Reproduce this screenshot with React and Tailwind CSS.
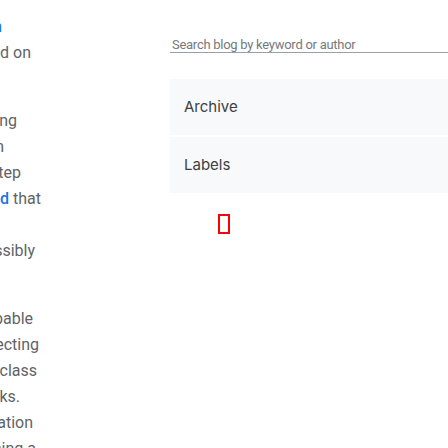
const body = "font-['Roboto',sans-serif] text-[16px] leading-[26px] text-[#5f6368]";

function Line({ end, children, className = "" }) {
  // fragment of a wrapped line; the start of the line runs off to the left
  return (
    <div className={`flex justify-end h-[26px] ${end}`}>
      <span className={`whitespace-nowrap shrink-0 ${className}`}>{children}</span>
    </div>
  );
}

export default function App() {
  return (
    <div className="w-[448px] h-[448px] overflow-hidden bg-white flex">
      {/* article column, clipped at the left edge */}
      <div className={`w-[45px] shrink-0 ${body}`}>
        <p className="mt-[14px]">
          <Line end="w-[2px]" className="text-[#1a73e8]">documentation</Line>
          <Line end="w-[31px]">model based on</Line>
          <Line end="w-[0px]">it</Line>
        </p>
        <p className="mt-[16px]">
          <Line end="w-[17px]">training</Line>
          <Line end="w-[4px]">on</Line>
          <Line end="w-[21px]">next step</Line>
          <Line end="w-[41px]">
            <span className="text-[#1a73e8] font-medium">found</span> that
          </Line>
          <Line end="w-[0px]">a</Line>
          <Line end="w-[35px]">possibly</Line>
          <Line end="w-[0px]">to</Line>
        </p>
        <p className="mt-[16px]">
          <Line end="w-[33px]">capable</Line>
          <Line end="w-[39px]">detecting</Line>
          <Line end="w-[37px]">first-class</Line>
          <Line end="w-[20px]">tasks.</Line>
          <Line end="w-[33px]">information</Line>
          <Line end="w-[36px]">using a</Line>
        </p>
      </div>

      {/* sidebar */}
      <aside className="ml-[125px] w-[300px] shrink-0">
        <div className="mt-[38px] border-b border-[#9aa0a6] pl-[2px] font-['Roboto',sans-serif] text-[13px] tracking-[-0.27px] leading-[14px] text-[#757a80]">
          Search blog by keyword or author
        </div>
        <div className="mt-[26px] h-[56px] bg-[#f8f9fa] flex items-center px-[14px] font-['Inter',sans-serif] text-[15px] text-[#3c4043]">
          Archive
        </div>
        <div className="mt-[2px] h-[56px] bg-[#f8f9fa] flex items-center px-[14px] font-['Inter',sans-serif] text-[15px] text-[#3c4043]">
          Labels
        </div>
        <div className="mt-[21px] ml-[48px] w-[12px] h-[20px] border-2 border-[#ff0000]" />
      </aside>
    </div>
  );
}
